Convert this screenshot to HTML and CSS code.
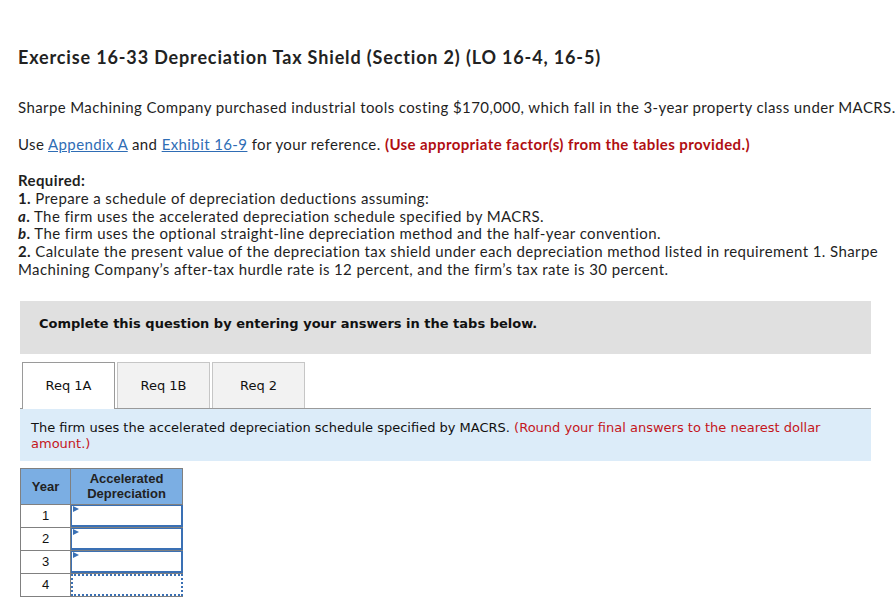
FILE: index.html
```html
<!DOCTYPE html>
<html>
<head>
<meta charset="utf-8">
<link rel="stylesheet" href="styles.css">
</head>
<body>
<div class="page">
  <h1 class="title">Exercise 16-33 Depreciation Tax Shield (Section 2) (LO 16-4, 16-5)</h1>
  <p class="para">Sharpe Machining Company purchased industrial tools costing $170,000, which fall in the 3-year property class under MACRS.</p>
  <p class="para">Use <a class="link" href="#">Appendix A</a> and <a class="link" href="#">Exhibit 16-9</a> for your reference. <strong class="red">(Use appropriate factor(s) from the tables provided.)</strong></p>
  <div class="required">
    <strong>Required:</strong><br>
    <strong>1.</strong> Prepare a schedule of depreciation deductions assuming:<br>
    <strong><em>a</em>.</strong> The firm uses the accelerated depreciation schedule specified by MACRS.<br>
    <strong><em>b</em>.</strong> The firm uses the optional straight-line depreciation method and the half-year convention.<br>
    <strong>2.</strong> Calculate the present value of the depreciation tax shield under each depreciation method listed in requirement 1. Sharpe Machining Company’s after-tax hurdle rate is 12 percent, and the firm’s tax rate is 30 percent.
  </div>

  <div class="question">
    <div class="complete">Complete this question by entering your answers in the tabs below.</div>
    <div class="tabs">
      <div class="tab active">Req 1A</div>
      <div class="tab">Req 1B</div>
      <div class="tab">Req 2</div>
    </div>
    <div class="instr">The firm uses the accelerated depreciation schedule specified by MACRS. <span class="instr-red">(Round your final answers to the nearest dollar amount.)</span></div>

    <table class="grid">
      <thead>
        <tr><th class="c-year">Year</th><th class="c-dep">Accelerated<br>Depreciation</th></tr>
      </thead>
      <tbody>
        <tr><td class="c-year">1</td><td class="cell"><span class="inp"></span></td></tr>
        <tr><td class="c-year">2</td><td class="cell"><span class="inp"></span></td></tr>
        <tr><td class="c-year">3</td><td class="cell"><span class="inp"></span></td></tr>
        <tr><td class="c-year">4</td><td class="cell"><span class="inp dotted"></span></td></tr>
      </tbody>
    </table>
  </div>
</div>
</body>
</html>
```
FILE: styles.css
```css
html, body {
  margin: 0;
  padding: 0;
  background: #fff;
}
.page {
  padding: 46px 0 0 18px;
  font-family: Lato, "Open Sans", sans-serif;
  color: #1f1f1f;
  font-size: 15px;
  letter-spacing: 0.4px;
}
.title {
  margin: 0;
  font-size: 18px;
  line-height: 22px;
  font-weight: 700;
  color: #222;
  letter-spacing: 0.85px;
}
.para {
  margin: 0;
  line-height: 20px;
}
.title + .para {
  margin-top: 29px;
}
.para + .para {
  margin-top: 17px;
}
.link {
  color: #2f6db5;
  text-decoration: underline;
}
.red {
  color: #b00e12;
  font-weight: 700;
}
.required {
  margin-top: 18px;
  line-height: 17.8px;
  padding-right: 10px;
}
.question {
  margin-top: 22px;
  font-family: "DejaVu Sans", Verdana, sans-serif;
  font-size: 13px;
  letter-spacing: 0;
  padding-left: 2px;
  width: 851px;
}
.complete {
  background: #e0e0e0;
  height: 53px;
  box-sizing: border-box;
  padding: 14px 0 0 19px;
  font-weight: 700;
  color: #111;
  line-height: 18px;
}
.tabs {
  display: flex;
  gap: 2px;
  margin-top: 8px;
  padding-left: 2px;
  border-bottom: 1px solid #9a9a9a;
  height: 46px;
}
.tab {
  width: 93px;
  height: 46px;
  box-sizing: border-box;
  background: #f2f2f2;
  border: 1px solid #c6c6c6;
  border-bottom: none;
  display: flex;
  align-items: center;
  justify-content: center;
  color: #111;
  font-size: 13px;
}
.tab.active {
  background: #fff;
  border-color: #9a9a9a;
  height: 47px;
  margin-bottom: -1px;
}
.instr {
  background: #dcecf9;
  padding: 11px 11px 9px;
  line-height: 16px;
  color: #111;
}
.instr-red {
  color: #c4161c;
}
.grid {
  margin-top: 7px;
  border-collapse: collapse;
  font-family: "Liberation Sans", Arial, sans-serif;
  font-size: 13px;
  color: #111;
}
.grid th {
  background: #7baee3;
  border: 1px solid #808080;
  font-weight: 700;
  line-height: 15px;
  height: 35px;
  padding: 0;
  color: #222;
}
.grid th.c-year {
  width: 49px;
}
.grid th.c-dep {
  width: 111px;
}
.grid td {
  border: 1px solid #808080;
  height: 22px;
  padding: 0;
  text-align: center;
}
.grid td.cell {
  border-right: none;
  border-top: none;
  position: relative;
}
.inp {
  position: relative;
  display: block;
  height: 22px;
  box-sizing: border-box;
  border: 2px solid #3a70b4;
  border-top-width: 1px;
  border-left-width: 1px;
  background: #fff;
}
.inp::before {
  content: "";
  position: absolute;
  left: 1px;
  top: 0;
  border-left: 6px solid #3a70b4;
  border-top: 3px solid transparent;
  border-bottom: 3px solid transparent;
}
.inp.dotted {
  border: 2px dotted #3a70b4;
}
.inp.dotted::before {
  display: none;
}
```
